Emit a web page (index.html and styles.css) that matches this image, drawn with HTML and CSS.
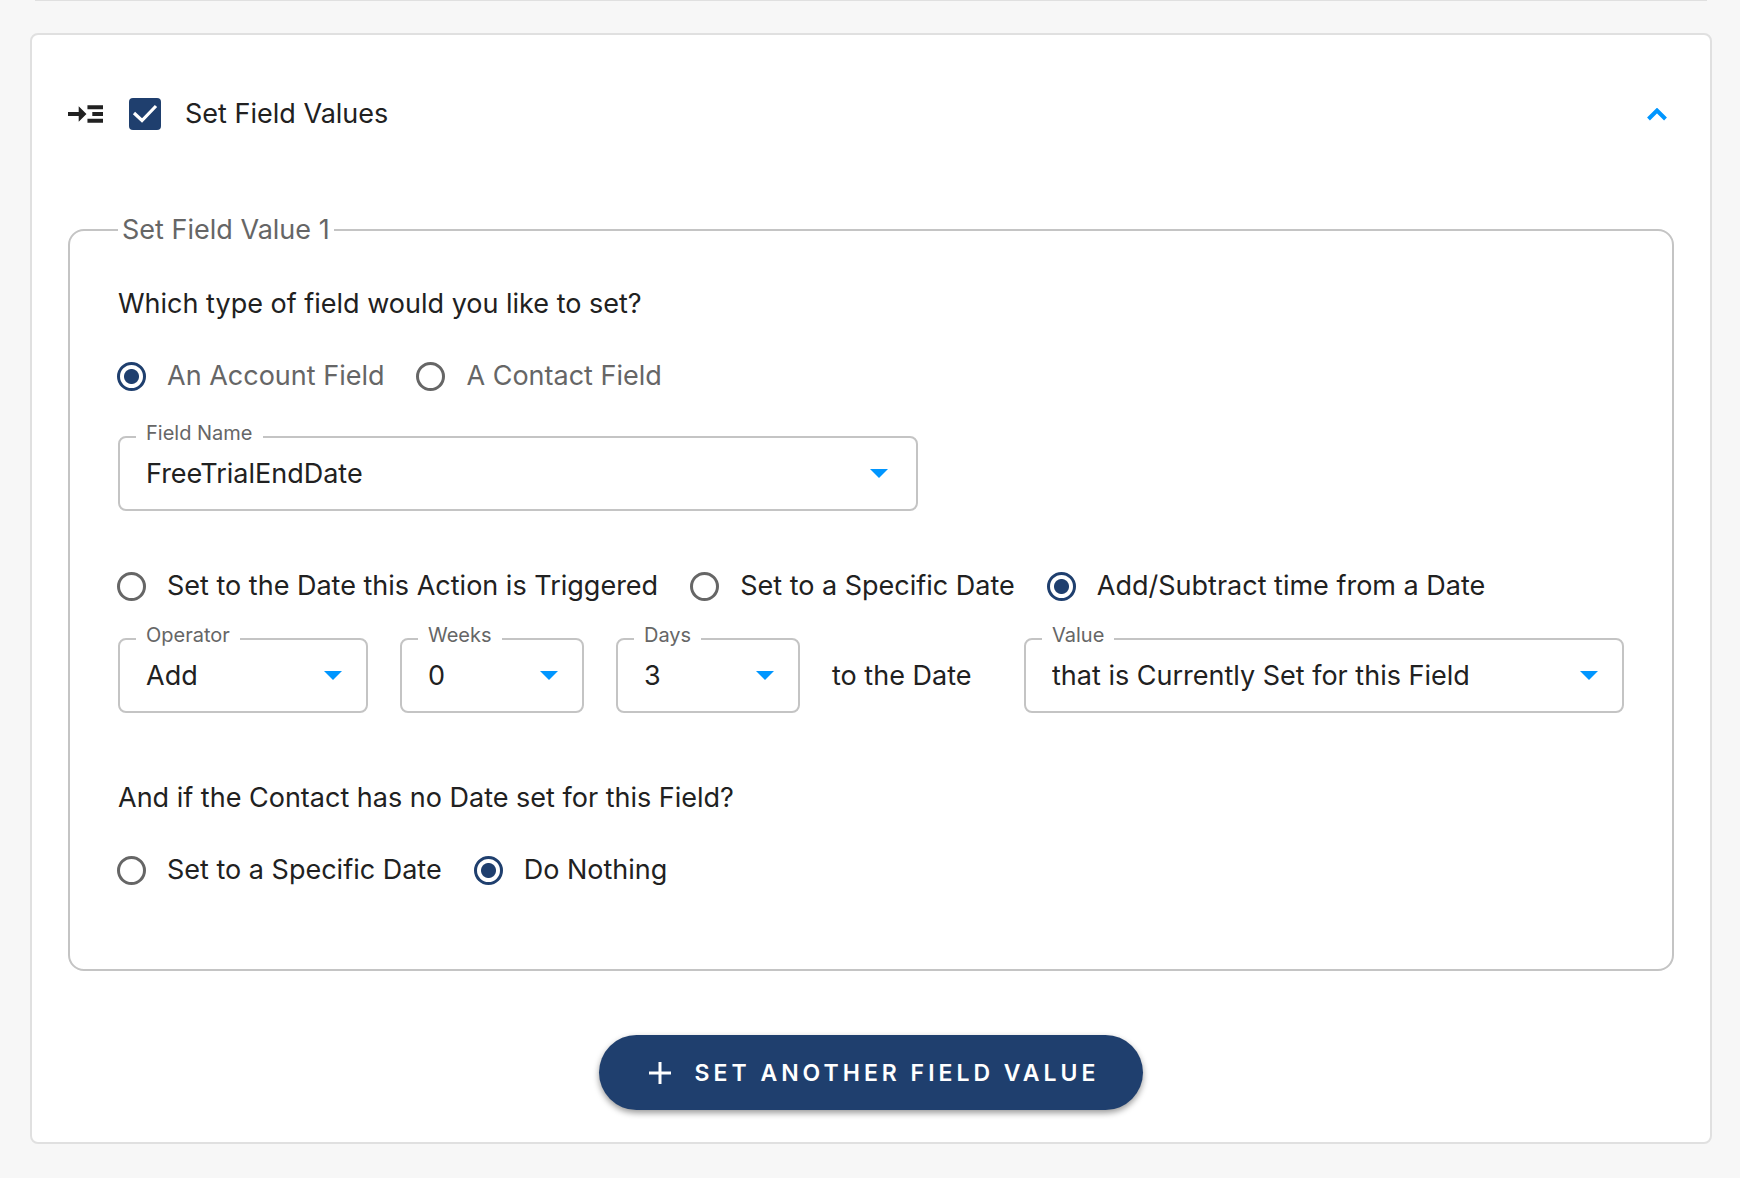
FILE: index.html
```html
<!doctype html>
<html lang="en">

<head>
    <meta charset="utf-8">
    <title>Set Field Values</title>
    <link rel="stylesheet" href="styles.css">
</head>

<body>
    <div class="card-end"></div>

    <section class="card">
        <header class="card-header">
            <svg class="icon-set" viewBox="0 0 36 18" aria-hidden="true">
                <path d="M0 7h11V1l8 8-8 8v-6H0zM20 0h16v4H20zM25 7h11v4H25zM20 14h16v4H20z" />
            </svg>
            <label class="toggle">
                <input type="checkbox" class="checkbox" checked>
                Set Field Values
            </label>
            <button type="button" class="collapse" aria-label="Collapse">
                <svg viewBox="0 0 20 13" aria-hidden="true"><path d="M1.500 11L10 2.500l8.500 8.500" /></svg>
            </button>
        </header>

        <fieldset class="group">
            <legend>Set Field Value 1</legend>

            <p class="question">Which type of field would you like to set?</p>
            <div class="radios muted">
                <label><input type="radio" name="type" checked>An Account Field</label>
                <label><input type="radio" name="type">A Contact Field</label>
            </div>

            <div class="select field-name">
                <label for="field">Field Name</label>
                <select id="field"><option>FreeTrialEndDate</option></select>
            </div>

            <div class="radios">
                <label><input type="radio" name="mode">Set to the Date this Action is Triggered</label>
                <label><input type="radio" name="mode">Set to a Specific Date</label>
                <label><input type="radio" name="mode" checked>Add/Subtract time from a Date</label>
            </div>

            <div class="offset">
                <div class="select">
                    <label for="operator">Operator</label>
                    <select id="operator"><option>Add</option><option>Subtract</option></select>
                </div>
                <div class="select">
                    <label for="weeks">Weeks</label>
                    <select id="weeks"><option>0</option></select>
                </div>
                <div class="select">
                    <label for="days">Days</label>
                    <select id="days"><option>3</option></select>
                </div>
                <span>to the Date</span>
                <div class="select">
                    <label for="value">Value</label>
                    <select id="value"><option>that is Currently Set for this Field</option></select>
                </div>
            </div>

            <p class="question fallback">And if the Contact has no Date set for this Field?</p>
            <div class="radios">
                <label><input type="radio" name="fallback">Set to a Specific Date</label>
                <label><input type="radio" name="fallback" checked>Do Nothing</label>
            </div>
        </fieldset>

        <button type="button" class="add">
            <svg viewBox="0 0 22 22" aria-hidden="true"><path d="M11 0v22M0 11h22" /></svg>
            Set Another Field Value
        </button>
    </section>
</body>

</html>
```
FILE: styles.css
```css
* {
    box-sizing: border-box;
}

body {
    margin: 0;
    padding: 0 28px 32px 30px;
    background: #f7f7f7;
    color: #212121;
    font-family: Inter, sans-serif;
    font-size: 27px;
    line-height: 32px;
}

button,
select {
    font: inherit;
    color: inherit;
}

/* bottom edge of the card above */
.card-end {
    height: 1px;
    margin: 0 5px;
    background: #e0e0e0;
}

.card {
    margin-top: 32px;
    padding: 0 36px 32px;
    background: #fff;
    border: 2px solid #e0e0e0;
    border-radius: 8px;
}

.card-header {
    display: flex;
    align-items: center;
    padding: 63px 0;
}

.icon-set {
    width: 35px;
    height: 18px;
    margin-right: 26px;
    fill: #212121;
}

.toggle {
    display: flex;
    align-items: center;
    gap: 24px;
}

.checkbox {
    appearance: none;
    width: 32px;
    height: 32px;
    margin: 0;
    border-radius: 4px;
}

.checkbox:not(:checked) {
    border: 3px solid #666;
}

.checkbox:checked {
    background: #1f3f6e url("data:image/svg+xml,%3Csvg xmlns='http://www.w3.org/2000/svg' viewBox='0 0 32 32'%3E%3Cpath d='M5 15l8 7.500L27 8' fill='none' stroke='white' stroke-width='3.200'/%3E%3C/svg%3E");
}

.collapse {
    margin-left: auto;
    padding: 0 7px;
    border: 0;
    background: none;
}

.collapse svg {
    display: block;
    width: 20px;
    height: 13px;
    fill: none;
    stroke: #0096ff;
    stroke-width: 4;
}

.group {
    margin: 21px 0 0;
    padding: 42px 48px 83px;
    border: 2px solid #c4c4c4;
    border-radius: 16px;
    min-width: 0;
}

.group legend {
    padding: 0 4px;
    color: #666;
}

.question {
    margin: 0 0 40px;
}

.radios {
    display: flex;
    flex-wrap: wrap;
    gap: 8px 32px;
    margin-left: -1px;
}

.radios label {
    display: flex;
    align-items: center;
    gap: 21px;
}

.muted {
    color: #666;
}

.radios input {
    appearance: none;
    width: 29px;
    height: 29px;
    margin: 0;
    border: 3px solid #666;
    border-radius: 50%;
}

.radios input:checked {
    border-color: #1f3f6e;
    background: radial-gradient(circle, #1f3f6e 7px, transparent 8px);
}

.select {
    position: relative;
    display: grid;
    align-items: center;
}

/* the label sits over the top border */
.select label {
    position: absolute;
    top: -14px;
    left: 18px;
    padding: 0 10px;
    background: #fff;
    color: #666;
    font-size: 20px;
    line-height: 22px;
}

.select select {
    appearance: none;
    width: 100%;
    height: 75px;
    padding: 0 64px 0 26px;
    border: 2px solid #c4c4c4;
    border-radius: 8px;
    background: none;
}

.select select,
.select::after {
    grid-area: 1 / 1;
}

.select::after {
    content: "";
    justify-self: end;
    margin-right: 26px;
    border: 9px solid transparent;
    border-top-color: #0096ff;
    border-bottom: 0;
    pointer-events: none;
}

.field-name {
    max-width: 800px;
    margin: 44px 0 59px;
}

.field-name::after {
    margin-right: 30px;
}

.offset {
    display: grid;
    grid-template-columns: 250fr 184fr 184fr minmax(160px, auto) 600fr;
    align-items: center;
    gap: 32px;
    margin-top: 36px;
}

.fallback {
    margin-top: 69px;
}

.add {
    display: flex;
    align-items: center;
    gap: 24px;
    height: 75px;
    margin: 64px auto 0;
    padding: 0 44px 0 50px;
    border: 0;
    border-radius: 38px;
    background: #1f3f6e;
    box-shadow: 0 3px 6px rgba(0, 0, 0, 0.4);
    color: #fff;
    font-size: 23px;
    font-weight: 600;
    letter-spacing: 4px;
    text-transform: uppercase;
}

.add svg {
    width: 22px;
    height: 22px;
    stroke: #fff;
    stroke-width: 3;
}
```
